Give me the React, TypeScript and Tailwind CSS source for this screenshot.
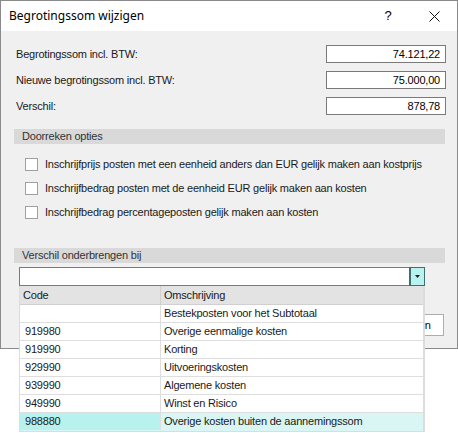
import React from "react";

const rows = [
  { code: "", desc: "Bestekposten voor het Subtotaal" },
  { code: "919980", desc: "Overige eenmalige kosten" },
  { code: "919990", desc: "Korting" },
  { code: "929990", desc: "Uitvoeringskosten" },
  { code: "939990", desc: "Algemene kosten" },
  { code: "949990", desc: "Winst en Risico" },
  { code: "988880", desc: "Overige kosten buiten de aannemingssom" },
];

const options = [
  "Inschrijfprijs posten met een eenheid anders dan EUR gelijk maken aan kostprijs",
  "Inschrijfbedrag posten met de eenheid EUR gelijk maken aan kosten",
  "Inschrijfbedrag percentageposten gelijk maken aan kosten",
];

function Field({ label, value }: { label: string; value: string }) {
  return (
    <div className="flex items-center justify-between h-[18px] pl-[15px] pr-[11px]">
      <span className="text-[#1a1a1a]">{label}</span>
      <div className="w-[120px] h-[18px] border border-[#7a7a7a] bg-white text-right pr-[5px] leading-[16px] text-black">
        {value}
      </div>
    </div>
  );
}

function SectionHeader({ title }: { title: string }) {
  return (
    <div className="ml-[13px] mr-[12px] h-[15px] bg-[#d9d9d9] pl-[8px] leading-[15px] text-[#333]">
      {title}
    </div>
  );
}

export default function App() {
  return (
    <div
      className="relative w-[458px] h-[433px] bg-white overflow-hidden text-[11px] tracking-[-0.2px]"
      style={{ fontFamily: '"Liberation Sans", Arial, sans-serif' }}
    >
      <div className="relative w-[458px] h-[349px] border border-[#8a8a8a] bg-[#f0f0f0]">
        {/* title bar */}
        <div className="h-[30px] bg-white flex items-center pl-[8px] tracking-normal">
          <span
            className="text-[12px] text-black flex-1"
            style={{ fontFamily: '"Noto Sans", "Open Sans", sans-serif' }}
          >
            Begrotingssom wijzigen
          </span>
          <span className="w-[46px] text-center text-[13px] text-black">?</span>
          <span className="w-[46px] flex justify-center">
            <svg width="11" height="11" viewBox="0 0 11 11">
              <path d="M0.5 0.5 L10.5 10.5 M10.5 0.5 L0.5 10.5" stroke="#111" strokeWidth="1" />
            </svg>
          </span>
        </div>

        <div className="pt-[14px] flex flex-col gap-[8px]">
          <Field label="Begrotingssom incl. BTW:" value="74.121,22" />
          <Field label="Nieuwe begrotingssom incl. BTW:" value="75.000,00" />
          <Field label="Verschil:" value="878,78" />
        </div>

        <div className="mt-[14px]">
          <SectionHeader title="Doorreken opties" />
        </div>

        <div className="pt-[14px] pl-[24px] flex flex-col gap-[11px]">
          {options.map((o) => (
            <label key={o} className="flex items-center gap-[7px] h-[13px] text-[#1a1a1a]">
              <span className="w-[13px] h-[13px] border border-[#a0a0a0] bg-white shrink-0" />
              <span>{o}</span>
            </label>
          ))}
        </div>

        <div className="mt-[29px]">
          <SectionHeader title="Verschil onderbrengen bij" />
        </div>

        <div className="mt-[4px] ml-[18px] w-[406px] h-[19px] border border-[#7a7a7a] bg-white flex justify-end">
          <div className="w-[14px] h-[17px] bg-[#b9f3ef] border-l border-[#3f6f6f] outline outline-1 outline-[#3f6f6f] flex items-center justify-center">
            <svg width="5" height="3" viewBox="0 0 5 3">
              <path d="M0 0 H5 L2.5 3 Z" fill="#222" />
            </svg>
          </div>
        </div>

        {/* partially hidden button */}
        <div className="absolute left-[368px] top-[313px] w-[75px] h-[22px] border border-[#adadad] bg-white flex items-center justify-center text-black">
          Annuleren
        </div>
      </div>

      {/* dropdown list overlay */}
      <div className="absolute left-[19px] top-[286px] w-[406px] border-l border-r-2 border-b border-[#dcdcdc] bg-white text-[#1a1a1a]">
        <div className="flex h-[19px] bg-[#e3e3e3] border-b border-[#d0d0d0] leading-[19px]">
          <div className="w-[141px] pl-[3px] border-r border-[#d0d0d0]">Code</div>
          <div className="flex-1 pl-[3px]">Omschrijving</div>
        </div>
        {rows.map((r, i) => {
          const sel = i === rows.length - 1;
          return (
            <div
              key={i}
              className={`flex h-[18px] leading-[17px] border-b ${sel ? "border-[#d8f6f5]" : "border-[#dedede]"}`}
            >
              <div className={`w-[141px] pl-[5px] border-r border-[#dedede] ${sel ? "bg-[#b8f2ee]" : ""}`}>
                {r.code}
              </div>
              <div className={`flex-1 pl-[3px] ${sel ? "bg-[#d9f6f5]" : ""}`}>{r.desc}</div>
            </div>
          );
        })}
      </div>
    </div>
  );
}
